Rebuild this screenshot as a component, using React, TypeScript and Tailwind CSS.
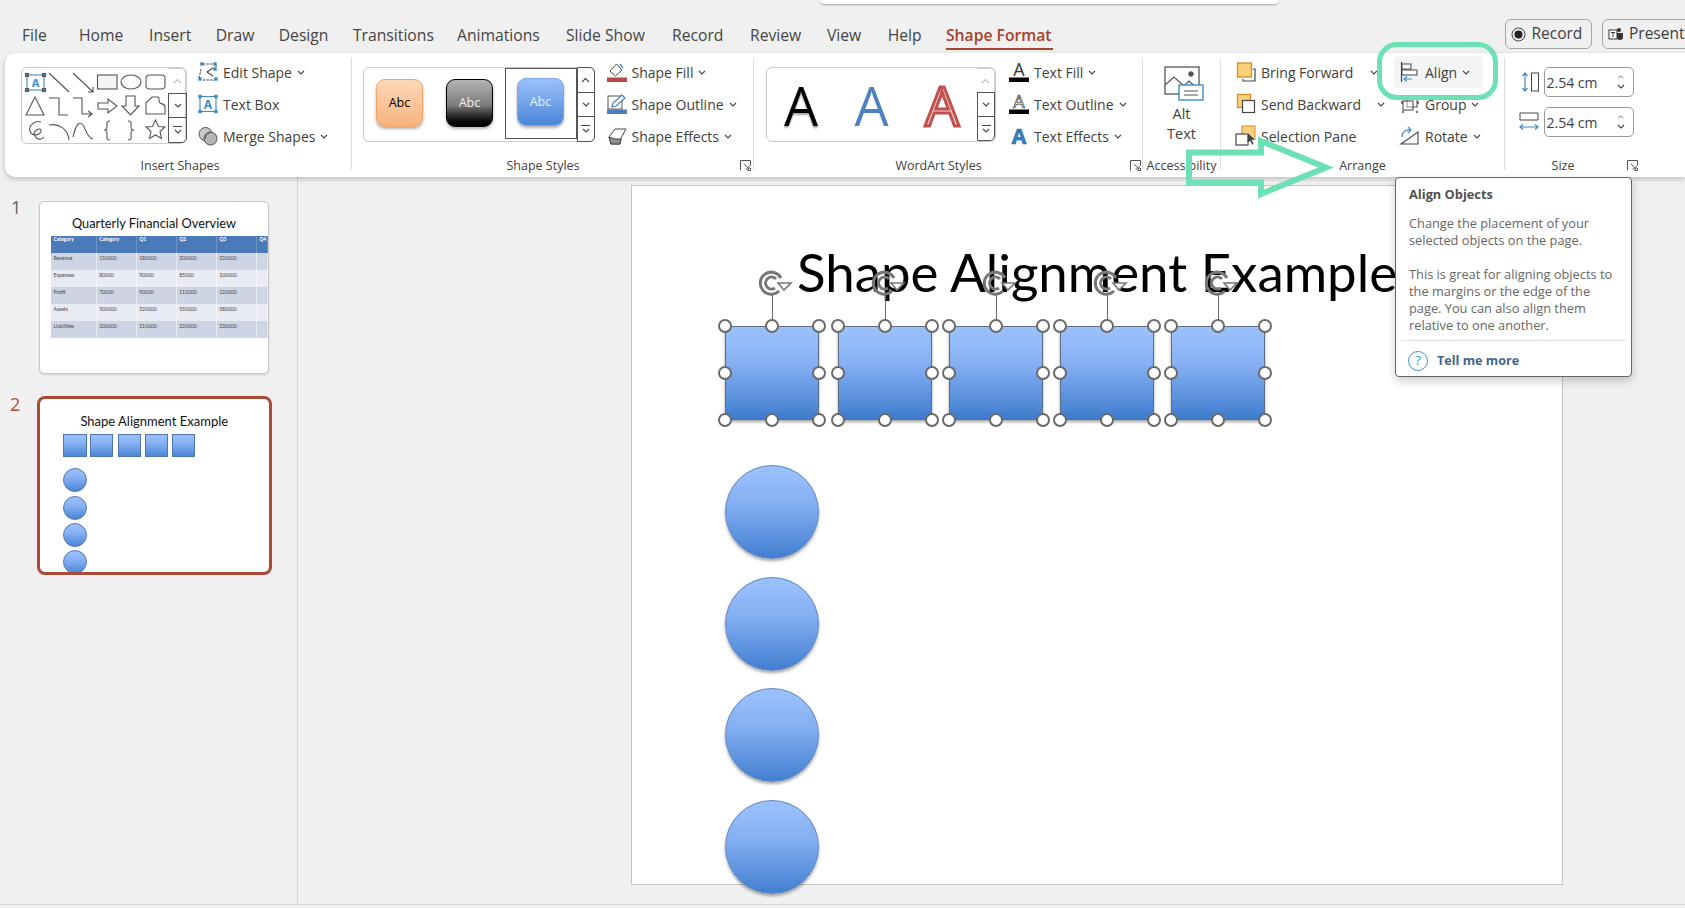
import React from "react";

const TABS: [string, string][] = [
  ["File", "w-[57px]"], ["Home", "w-[70px]"], ["Insert", "w-[66.7px]"], ["Draw", "w-[63px]"], ["Design", "w-[74.3px]"],
  ["Transitions", "w-[104px]"], ["Animations", "w-[109px]"], ["Slide Show", "w-[106px]"], ["Record", "w-[78px]"],
  ["Review", "w-[77px]"], ["View", "w-[60.7px]"], ["Help", "w-[58.3px]"],
];

const Chevron = ({ className = "" }: { className?: string }) => (
  <svg width="8" height="5" viewBox="0 0 8 5" className={"shrink-0 " + className} fill="none" stroke="#444" strokeWidth="1.1"><path d="M1 1l3 3 3-3" /></svg>
);

const Ic = ({ children }: { children: React.ReactNode }) => (
  <svg width="22" height="22" viewBox="0 0 22 22" fill="none" className="shrink-0 overflow-visible">{children}</svg>
);

const Sq = ({ x, y, c = "#3f8bc2", s = 3.4 }: { x: number; y: number; c?: string; s?: number }) => <rect x={x - s / 2} y={y - s / 2} width={s} height={s} fill={c} />;

const EditShapeIcon = () => (
  <Ic>
    <path d="M6 3h10M4 8l-2 10M6 19h12M19 4v2" stroke="#444" strokeWidth="1" strokeDasharray="2.5 1" />
    <path d="M16 7l-6 4 6 4" stroke="#444" strokeWidth="1.1" />
    <Sq x={5} y={3} /><Sq x={18} y={3} /><Sq x={18} y={8} /><Sq x={3} y={18} /><Sq x={19} y={18} />
  </Ic>
);
const TextBoxIcon = () => (
  <Ic>
    <rect x="3" y="3.5" width="16" height="15" stroke="#3f8bc2" strokeWidth="1.1" fill="#fff" />
    <Sq x={3} y={3.5} /><Sq x={19} y={3.5} /><Sq x={3} y={18.5} /><Sq x={19} y={18.5} />
    <text x="11" y="16" textAnchor="middle" fontSize="12" fontWeight="700" fill="#3f8bc2" fontFamily="Open Sans">A</text>
  </Ic>
);
const MergeIcon = () => (
  <Ic>
    <circle cx="8.5" cy="9" r="6.5" fill="#c9c9c9" stroke="#555" />
    <circle cx="13.5" cy="13.5" r="6.5" fill="#b5b5b5" stroke="#555" />
    <path d="M8 14c1-4 3-6 6-7" stroke="#555" />
  </Ic>
);
const FillIcon = () => (
  <Ic>
    <path d="M4 10l6.5-7 5.5 6-6.5 6z" fill="#fff" stroke="#444" />
    <path d="M14 3l3 4" stroke="#3f8bc2" strokeWidth="1.4" />
    <rect x="1" y="16.5" width="20" height="4.5" fill="#b8474a" />
  </Ic>
);
const OutlineIcon = () => (
  <Ic>
    <rect x="2" y="3" width="14" height="13" fill="#fff" stroke="#555" />
    <path d="M6 14l1-4 9-8 3 3-9 8z" fill="#fff" stroke="#3f7fbf" strokeWidth="1.2" />
    <rect x="1" y="16.5" width="20" height="4.5" fill="#4b7db8" />
  </Ic>
);
const EffectsIcon = () => (
  <Ic>
    <path d="M3 12l6-8h11l-5 9-1 6H5z" fill="#fff" stroke="#444" />
    <path d="M9 14h6l-1 5H5l-2-7z" fill="#8f8f8f" stroke="#444" />
  </Ic>
);
const AIcon = ({ kind }: { kind: "fill" | "outline" | "effects" }) => (
  <Ic>
    {kind === "effects" ? (
      <text x="11" y="19" textAnchor="middle" fontSize="21" fontWeight="700" fill="#2f83c5" stroke="#1d5f9a" strokeWidth=".6" fontFamily="Open Sans">A</text>
    ) : (
      <>
        <text x="11" y="14.5" textAnchor="middle" fontSize="18" fill={kind === "fill" ? "#333" : "#fff"} stroke={kind === "fill" ? "none" : "#333"} strokeWidth=".7" fontFamily="Open Sans">A</text>
        <rect x="1" y="16.5" width="20" height="4.5" fill="#000" />
      </>
    )}
  </Ic>
);
const BringIcon = () => (
  <Ic>
    <path d="M18 8h2v12H8v-2" stroke="#444" strokeWidth="1.2" />
    <rect x="2.5" y="2" width="14" height="14" fill="#fbd07a" stroke="#d48c26" strokeWidth="1.3" />
  </Ic>
);
const SendIcon = () => (
  <Ic>
    <rect x="2.5" y="1.5" width="13" height="13" fill="#fbd07a" stroke="#d48c26" strokeWidth="1.3" />
    <rect x="7.5" y="7.5" width="12" height="12" fill="#fff" stroke="#444" strokeWidth="1.2" />
  </Ic>
);
const PaneIcon = () => (
  <Ic>
    <rect x="7" y="1" width="13" height="13" fill="#fbd07a" stroke="#d48c26" />
    <rect x="1" y="9" width="12" height="11" fill="#fff" stroke="#444" strokeWidth="1.2" />
    <path d="M12 7v12l3-3 2 4 2-1-2-4h4z" fill="#444" stroke="#fff" strokeWidth=".6" />
  </Ic>
);
const AlignIcon = () => (
  <Ic>
    <path d="M2.5 1v20" stroke="#444" strokeWidth="1.2" />
    <rect x="3" y="3" width="9" height="5" fill="#fff" stroke="#444" />
    <rect x="3" y="9" width="15" height="5" fill="#fff" stroke="#444" />
    <path d="M13 18H5m3-2.5L5 18l3 2.5" stroke="#3f8bc2" strokeWidth="1.1" />
  </Ic>
);
const GroupIcon = () => (
  <Ic>
    <path d="M3 3h2M9 3h2M17 3h2M3 19h2M17 19h2M3 8v3M19 8v3" stroke="#444" strokeWidth="1.4" />
    <rect x="8" y="5" width="10" height="9" stroke="#444" />
    <rect x="4" y="8" width="10" height="9" stroke="#444" fill="#fff" fillOpacity=".4" />
  </Ic>
);
const RotateIcon = () => (
  <Ic>
    <path d="M2 19L19 7v12z" stroke="#444" strokeWidth="1.1" />
    <path d="M3 12c0-5 4-8 9-7m-3-3l3 3-3 3" stroke="#3f8bc2" strokeWidth="1.2" />
  </Ic>
);
const HeightIcon = () => (
  <Ic>
    <rect x="13.5" y="2" width="7" height="18" fill="#fff" stroke="#444" />
    <path d="M7 2v18M4.5 5L7 2l2.5 3M4.5 17L7 20l2.5-3" stroke="#3f8bc2" strokeWidth="1.2" />
  </Ic>
);
const WidthIcon = () => (
  <Ic>
    <path d="M2 9V2h18v7M2 9h18" stroke="#444" />
    <path d="M2 16h18M5 13.5L2 16l3 2.5M17 13.5l3 2.5-3 2.5" stroke="#3f8bc2" strokeWidth="1.2" />
  </Ic>
);
const Launcher = () => (
  <svg width="11" height="11" viewBox="0 0 11 11" fill="none" stroke="#555"><path d="M.5 10.5V.5h10v5" /><path d="M4 4l5 5M9 5.5V9H5.5M7.5 10.5h3V8" /></svg>
);

const Item = ({ icon, label, chevron, chevronClass = "ml-[1px]" }: { icon: React.ReactNode; label: string; chevron?: boolean; chevronClass?: string }) => (
  <div className="flex h-[32px] items-center gap-[4px] whitespace-nowrap text-[14px] text-[#404040]">
    {icon}
    <span>{label}</span>
    {chevron && <Chevron className={chevronClass} />}
  </div>
);

const ScrollCol = ({ light, className }: { light?: boolean; className: string }) => (
  <div className={"flex shrink-0 flex-col self-stretch " + className}>
    <div className={"flex flex-1 items-center justify-center rounded-tr-[5px] " + (light ? "border-y border-r border-[#d0d0d0]" : "border border-[#555]")}>
      <svg width="9" height="6" viewBox="0 0 9 6" fill="none" stroke={light ? "#bbb" : "#444"} strokeWidth="1.1"><path d="M1 5l3.5-3.5L8 5" /></svg>
    </div>
    <div className="-mt-px flex flex-1 items-center justify-center border border-[#555]">
      <Chevron />
    </div>
    <div className="-mt-px flex flex-1 flex-col items-center justify-center gap-[2px] rounded-br-[5px] border border-[#555]">
      <div className="h-px w-[9px] bg-[#444]" />
      <Chevron />
    </div>
  </div>
);

const Sep = () => <div className="my-[5px] h-[112px] w-px shrink-0 bg-[#dedede]" />;

const Group = ({ label, launcherClass, className, bodyClass = "", labelClass = "", children }: { label: string; launcherClass?: string; className: string; bodyClass?: string; labelClass?: string; children: React.ReactNode }) => (
  <div className={"relative flex shrink-0 flex-col " + className}>
    <div className={"flex h-[105px] items-start pt-[3px] " + bodyClass}>{children}</div>
    <div className={"flex h-[16px] items-center justify-center whitespace-nowrap text-[12.5px] text-[#404040] " + labelClass}>{label}</div>
    {launcherClass && <div className={"absolute bottom-[6px] " + launcherClass}><Launcher /></div>}
  </div>
);

const ShapesGallerySvg = () => (
  <svg width="146" height="75" viewBox="22 68 146 75" fill="none" stroke="#555" strokeWidth="1.1" className="shrink-0">
    <rect x="27" y="75" width="17" height="15" stroke="#3f8bc2" />
    <Sq x={27} y={75} s={3} /><Sq x={44} y={75} s={3} /><Sq x={27} y={90} s={3} /><Sq x={44} y={90} s={3} />
    <text x="35.5" y="87" textAnchor="middle" fontSize="11" fontWeight="700" fill="#3f8bc2" stroke="none" fontFamily="Open Sans">A</text>
    <path d="M49 73l20 19" />
    <path d="M73 73l20 19m-5 0h5v-5" />
    <rect x="97.5" y="75" width="19.5" height="14" fill="#f4f4f4" />
    <ellipse cx="131" cy="82" rx="10" ry="7" />
    <rect x="146" y="75" width="19" height="14" rx="3.5" />
    <path d="M35 97l9 18H26z" />
    <path d="M49 98h10v17h9" />
    <path d="M73 98h9v16h10m-4-3l4 3-4 3" />
    <path d="M98 103h10v-4l9 7-9 7v-4H98z" />
    <path d="M126 96h9v10h4l-8.500 9-8.500-9h4z" />
    <path d="M146 114v-11l6-6h6c2 0 0 5 2 6s5 1 5 4v7z" />
    <path d="M41 122c-6-2-13 4-11 9 3 7 12 3 11-1-1-3-9 1-6 6 2 4 7 4 9 1" />
    <path d="M49 125c10-2 19 4 20 15" />
    <path d="M73 137c3-14 7-16 10-12s4 13 10 14" />
    <path d="M110 121c-4 0-3 2-3 5s0 4-3 4c3 0 3 2 3 5s-1 5 3 5" />
    <path d="M128 121c4 0 3 2 3 5s0 4 3 4c-3 0-3 2-3 5s1 5-3 5" />
    <path d="M155.500 120l3 6.500 6.500.5-5 4.500 1.500 7-6-3.500-6 3.500 1.500-7-5-4.500 6.500-.5z" />
  </svg>
);

const Tile = ({ cls, text }: { cls: string; text: string }) => (
  <div className="flex h-[69px] w-[70px] items-center justify-center pb-[3px]">
    <div className={"flex h-[48px] w-[47px] items-center justify-center rounded-[9px] text-[12.5px] shadow-[0_2px_3px_rgba(0,0,0,.3)] " + cls}>{text}</div>
  </div>
);

const SizeBox = ({ icon }: { icon: React.ReactNode }) => (
  <div className="flex items-center gap-[4px]">
    {icon}
    <div className="flex h-[30px] w-[90px] items-center justify-between rounded-[5px] border border-[#9a9a9a] pl-[2px] pr-[8px] text-[14px] text-[#404040]">
      <span>2.54 cm</span>
      <div className="flex flex-col gap-[5px]">
        <svg width="7" height="4" viewBox="0 0 8 5" fill="none" stroke="#444"><path d="M1 4l3-3 3 3" /></svg>
        <Chevron />
      </div>
    </div>
  </div>
);

const Handle = ({ x, y }: { x: number; y: number }) => (
  <div className="absolute h-[14px] w-[14px] -translate-x-1/2 -translate-y-1/2 rounded-full border-[2.5px] border-[#6a6a6a] bg-white" style={{ left: x, top: y }} />
);

const RotateHandle = ({ x }: { x: number }) => (
  <svg width="36" height="30" viewBox="0 0 36 30" fill="none" className="absolute" style={{ left: x - 15, top: 81.7 }}>
    <path d="M22 23a11 11 0 1 1 2-13" stroke="#777" strokeWidth="3" />
    <path d="M18 20a6 6 0 1 1 1-9" stroke="#777" strokeWidth="3" />
    <path d="M21 15h13l-7 7z" fill="#fff" stroke="#777" strokeWidth="1.6" />
  </svg>
);

const SQUARES = [93.3, 205.7, 316.7, 428.3, 539];
const CIRCLES = [279, 391, 502, 614];
const THUMB_SQ = [23.6, 50.3, 78.3, 105.3, 132.3];
const THUMB_CI = [68.3, 96.3, 123.3, 150.3];
const ROWS = [
  ["Revenue", "150000", "180000", "200000", "220000"],
  ["Expenses", "80000", "90000", "85000", "100000"],
  ["Profit", "70000", "90000", "115000", "120000"],
  ["Assets", "500000", "520000", "550000", "580000"],
  ["Liabilities", "200000", "210000", "220000", "230000"],
];
const HEAD = ["Category", "Category", "Q1", "Q2", "Q3", "Q4"];

export default function App() {
  return (
    <div className="relative h-[908px] w-[1685px] overflow-hidden bg-[#f0f0f0] font-['Open_Sans','Noto_Sans',sans-serif]">
      {/* search box edge */}
      <div className="absolute left-[820px] top-0 h-[4px] w-[458px] rounded-b-[4px] bg-white shadow-[0_1px_2px_rgba(0,0,0,.3)]" />

      {/* Tab row */}
      <div className="flex h-[53px] items-start pl-[22px]">
        <div className="flex pt-[23.500px]">
          {TABS.map(([t, w]) => (
            <div key={t} className={"whitespace-nowrap text-[15.7px] leading-[23px] text-[#444] " + w}>{t}</div>
          ))}
          <div className="w-[107px] whitespace-nowrap border-b-[2.5px] border-[#a8452e] pb-[1.500px] text-[15.7px] font-semibold leading-[23px] text-[#a4432a]">Shape Format</div>
        </div>
        <div className="ml-[452.500px] flex shrink-0 gap-[10px] pt-[19px]">
          <div className="flex h-[30px] w-[86.500px] items-center gap-[5px] rounded-[6px] border border-[#a5a5a5] pl-[5px] text-[15.5px] text-[#404040]">
            <svg width="15" height="15" viewBox="0 0 15 15" fill="none"><circle cx="7.500" cy="7.500" r="6.500" stroke="#444" /><circle cx="7.500" cy="7.500" r="4" fill="#222" /></svg>
            Record
          </div>
          <div className="flex h-[30px] w-[110px] shrink-0 items-center gap-[5px] rounded-[6px] border border-[#a5a5a5] pl-[5px] text-[15.5px] text-[#404040]">
            <svg width="16" height="16" viewBox="0 0 16 16" fill="none"><rect x="1" y="4" width="8" height="9" fill="#fff" stroke="#333" /><circle cx="11" cy="4" r="2" fill="#333" /><path d="M9 7h6v4a3 3 0 0 1-6 0z" fill="#333" /><path d="M3 6.500h4M5 6.500V11" stroke="#333" /></svg>
            Present
          </div>
        </div>
      </div>

      {/* Ribbon */}
      <div className="relative z-10 ml-[5px] flex h-[124px] rounded-l-[10px] bg-white shadow-[0_2px_5px_rgba(0,0,0,.22)]">
        <Group label="Insert Shapes" className="w-[346px]" bodyClass="pl-[16px]" labelClass="pl-[4px]">
          <div className="mt-[11px] flex h-[77px] w-[165px] shrink-0 rounded-[6px] border border-[#c9c9c9]">
            <ShapesGallerySvg />
            <ScrollCol light className="w-[19px]" />
          </div>
          <div className="ml-[11px] flex flex-col">
            <Item icon={<EditShapeIcon />} label="Edit Shape" chevron />
            <Item icon={<TextBoxIcon />} label="Text Box" />
            <Item icon={<MergeIcon />} label="Merge Shapes" chevron />
          </div>
        </Group>
        <Sep />
        <Group label="Shape Styles" launcherClass="right-[2px]" className="w-[401px]" bodyClass="pl-[10.500px]" labelClass="pr-[19px]">
          <div className="mt-[11px] flex h-[75px] w-[232px] shrink-0 items-center rounded-[6px] border border-[#c9c9c9] pl-[1px]">
            <Tile cls="border border-[#f0a468] bg-linear-to-b from-[#fdd9b8] to-[#f8b37d] text-black" text="Abc" />
            <Tile cls="border border-black bg-linear-to-b from-[#b4b4b4] via-[#7c7c7c] via-55% to-black text-[#eee]" text="Abc" />
            <div className="mb-[2px] border border-[#555]">
              <Tile cls="border border-[#7ea6e0] bg-linear-to-b from-[#9cc1fc] to-[#4a86d8] text-[#e8f0fc]" text="Abc" />
            </div>
            <ScrollCol className="-my-px -mr-px ml-auto w-[18px]" />
          </div>
          <div className="ml-[11px] flex flex-col">
            <Item icon={<FillIcon />} label="Shape Fill" chevron />
            <Item icon={<OutlineIcon />} label="Shape Outline" chevron />
            <Item icon={<EffectsIcon />} label="Shape Effects" chevron />
          </div>
        </Group>
        <Sep />
        <Group label="WordArt Styles" launcherClass="right-[1px]" className="w-[388px]" bodyClass="pl-[12px]" labelClass="pr-[19px]">
          <div className="mt-[11px] flex h-[75px] w-[230px] shrink-0 rounded-[6px] border border-[#c9c9c9]">
            <div className="flex flex-1 items-center text-[54px] font-medium leading-none">
              <span className="w-[70.500px] pl-[17px] text-black [text-shadow:0_2px_2px_rgba(0,0,0,.35)]">A</span>
              <span className="w-[70.500px] pl-[17px] text-[#4f81bd]">A</span>
              <span className="w-[60px] pl-[17px] text-[#f4d3d2] [-webkit-text-stroke:3px_#c0504d]">A</span>
            </div>
            <ScrollCol light className="w-[18px]" />
          </div>
          <div className="ml-[12px] flex flex-col">
            <Item icon={<AIcon kind="fill" />} label="Text Fill" chevron />
            <Item icon={<AIcon kind="outline" />} label="Text Outline" chevron />
            <Item icon={<AIcon kind="effects" />} label="Text Effects" chevron />
          </div>
        </Group>
        <Sep />
        <Group label="Accessibility" className="w-[77px]">
          <div className="flex w-full flex-col items-center pt-[10px] text-[14.500px] leading-[20px] text-[#404040]">
            <svg width="40" height="36" viewBox="0 0 40 36" fill="none" stroke="#555" className="ml-[4px]">
              <rect x="1" y="1" width="34" height="27" fill="#fff" strokeWidth="1.3" />
              <circle cx="27" cy="8" r="2.300" fill="#555" />
              <path d="M1 19l9-8 10 9 5-5 10 9" strokeWidth="1.2" />
              <rect x="15" y="19" width="24" height="15" fill="#fff" stroke="#3f8bc2" strokeWidth="1.4" />
              <path d="M20 25h14M20 29h14" strokeWidth="1.2" />
            </svg>
            <span className="mt-[2px]">Alt</span>
            <span>Text</span>
          </div>
        </Group>
        <Sep />
        <Group label="Arrange" className="w-[283px]" bodyClass="pl-[14px]">
          <div className="flex w-[159px] shrink-0 flex-col">
            <Item icon={<BringIcon />} label="Bring Forward" chevron chevronClass="ml-[13px]" />
            <Item icon={<SendIcon />} label="Send Backward" chevron chevronClass="ml-[12px]" />
            <Item icon={<PaneIcon />} label="Selection Pane" />
          </div>
          <div className="flex flex-col">
            <div className="w-[89px] rounded-[4px] bg-[#f4f4f4] pl-[5px]">
              <Item icon={<AlignIcon />} label="Align" chevron />
            </div>
            <div className="pl-[5px]"><Item icon={<GroupIcon />} label="Group" chevron /></div>
            <div className="pl-[5px]"><Item icon={<RotateIcon />} label="Rotate" chevron /></div>
          </div>
        </Group>
        <Sep />
        <Group label="Size" launcherClass="right-[5px]" className="w-[138px]" bodyClass="pl-[12.500px]" labelClass="pr-[22px]">
          <div className="flex flex-col gap-[10px] pt-[11px]">
            <SizeBox icon={<HeightIcon />} />
            <SizeBox icon={<WidthIcon />} />
          </div>
        </Group>
      </div>

      {/* Body */}
      <div className="flex h-[727px]">
        <aside className="w-[298px] shrink-0 border-r border-[#d4d4d4] pt-[24px]">
          <div className="flex">
            <div className="w-[39px] pl-[11px] text-[18px] leading-[12px] text-[#666]">1</div>
            <div className="h-[173px] w-[230px] overflow-hidden rounded-[5px] border border-[#c6c6c6] bg-white shadow-[0_1px_2px_rgba(0,0,0,.12)]">
              <div className="h-[34px] pt-[11px] text-center font-['Lato',sans-serif] text-[12.800px] leading-[20px] text-[#111]">Quarterly Financial Overview</div>
              <div className="ml-[11px] grid w-[217px] grid-cols-[45.700px_40px_40px_40px_40px_11.300px] font-['Lato',sans-serif] text-[5px] leading-[7px]">
                {HEAD.map((h, i) => (
                  <div key={i} className="h-[17px] overflow-hidden border-r border-[#6d94c6] bg-[#4a7ab9] pl-[2.500px] font-bold text-white">{h}</div>
                ))}
                {ROWS.map((r, ri) =>
                  [...r, ""].map((c, ci) => (
                    <div key={ri + "-" + ci} className={"h-[17px] border-r border-white/50 pl-[2.500px] pt-[2px] text-[#444] " + (ri % 2 === 0 ? "bg-[#cdd4e4]" : "bg-[#e8ebf3]")}>{c}</div>
                  ))
                )}
              </div>
            </div>
          </div>
          <div className="mt-[21.500px] flex">
            <div className="w-[36.500px] pl-[10px] pt-[2.500px] text-[18px] leading-[12px] text-[#b04d38]">2</div>
            <div className="relative h-[179px] w-[235.500px] overflow-hidden rounded-[8px] border-[3px] border-[#ab4a35] bg-white">
              <div className="pt-[12px] text-center font-['Lato',sans-serif] text-[13px] leading-[20px] text-[#111]">Shape Alignment Example</div>
              {THUMB_SQ.map((x) => (
                <div key={x} className="absolute top-[35.300px] h-[23.500px] w-[23.500px] border border-[#4f78aa] bg-linear-to-b from-[#9cc1fb] via-[#86b0f4] via-40% to-[#4a86d6]" style={{ left: x }} />
              ))}
              {THUMB_CI.map((y) => (
                <div key={y} className="absolute left-[23.600px] h-[24px] w-[24px] rounded-full border border-[#4f78aa] bg-linear-to-b from-[#9cc1fb] via-[#86b0f4] via-40% to-[#4a86d6]" style={{ top: y + 1 }} />
              ))}
            </div>
          </div>
        </aside>

        <main className="flex-1 pl-[333px] pt-[8px]">
          <div className="relative h-[700px] w-[932px] border border-[#c4c4c4] bg-white">
            <div className="absolute left-[165px] top-[51px] whitespace-nowrap font-['Lato',sans-serif] text-[52.800px] leading-[70px] text-black">Shape Alignment Example</div>
            {CIRCLES.map((y) => (
              <div key={y} className="absolute left-[93px] h-[94px] w-[94px] rounded-full border border-[#5c86ba] bg-linear-to-b from-[#9cc1fc] via-[#86b0f4] via-40% to-[#427fd0] shadow-[0_2px_3px_rgba(0,0,0,.35)]" style={{ top: y }} />
            ))}
            {SQUARES.map((x) => (
              <React.Fragment key={x}>
                <div className="absolute top-[108px] h-[32px] w-px bg-[#6a6a6a]" style={{ left: x + 47 }} />
                <div className="absolute top-[139.500px] h-[94px] w-[94px] border-[1.500px] border-[#5d6f85] bg-linear-to-b from-[#9cc1fc] via-[#86b0f4] via-40% to-[#3e7ccd] shadow-[0_2px_3px_rgba(0,0,0,.35)]" style={{ left: x }} />
                <RotateHandle x={x + 47} />
                {[0, 47, 94].map((dx) =>
                  [139.5, 186.5, 233.5].map((y) =>
                    dx === 47 && y === 186.5 ? null : <Handle key={dx + "-" + y} x={x + dx} y={y} />
                  )
                )}
              </React.Fragment>
            ))}
          </div>
        </main>
      </div>
      <div className="h-[4px] border-t border-[#d4d4d4]" />

      {/* Tooltip */}
      <div className="absolute left-[1395px] top-[177px] z-20 h-[200px] w-[237px] rounded-[4px] border border-[#666] bg-white shadow-[0_4px_10px_rgba(0,0,0,.2)]">
        <div className="pl-[13px] pt-[7px] text-[12.800px] font-bold leading-[18px] text-[#505050]">Align Objects</div>
        <div className="pl-[13px] pt-[12px] text-[12.800px] leading-[17px] text-[#666]">
          <div>Change the placement of your<br />selected objects on the page.</div>
          <div className="mt-[17px]">This is great for aligning objects to<br />the margins or the edge of the<br />page. You can also align them<br />relative to one another.</div>
        </div>
        <div className="mx-[5px] mt-[6px] h-px bg-[#dcdcdc]" />
        <div className="flex h-[38px] items-center gap-[9px] pl-[12px] pt-[2px]">
          <div className="flex h-[20px] w-[20px] items-center justify-center rounded-full border-[1.500px] border-[#3f96c8] text-[13px] text-[#3f96c8]">?</div>
          <span className="text-[12.600px] font-bold text-[#42658f]">Tell me more</span>
        </div>
      </div>

      {/* Annotations */}
      <div className="absolute left-[1376.500px] top-[42px] z-20 h-[58px] w-[121px] rounded-[20px] border-[5.500px] border-[#6de0b5]" />
      <svg width="160" height="70" viewBox="1180 132 160 70" fill="none" className="absolute left-[1180px] top-[132px] z-20">
        <path d="M1189 152.500H1261V141L1326 167.500L1261 194V182.500H1189Z" stroke="#6de0b5" strokeWidth="6" />
      </svg>
    </div>
  );
}
